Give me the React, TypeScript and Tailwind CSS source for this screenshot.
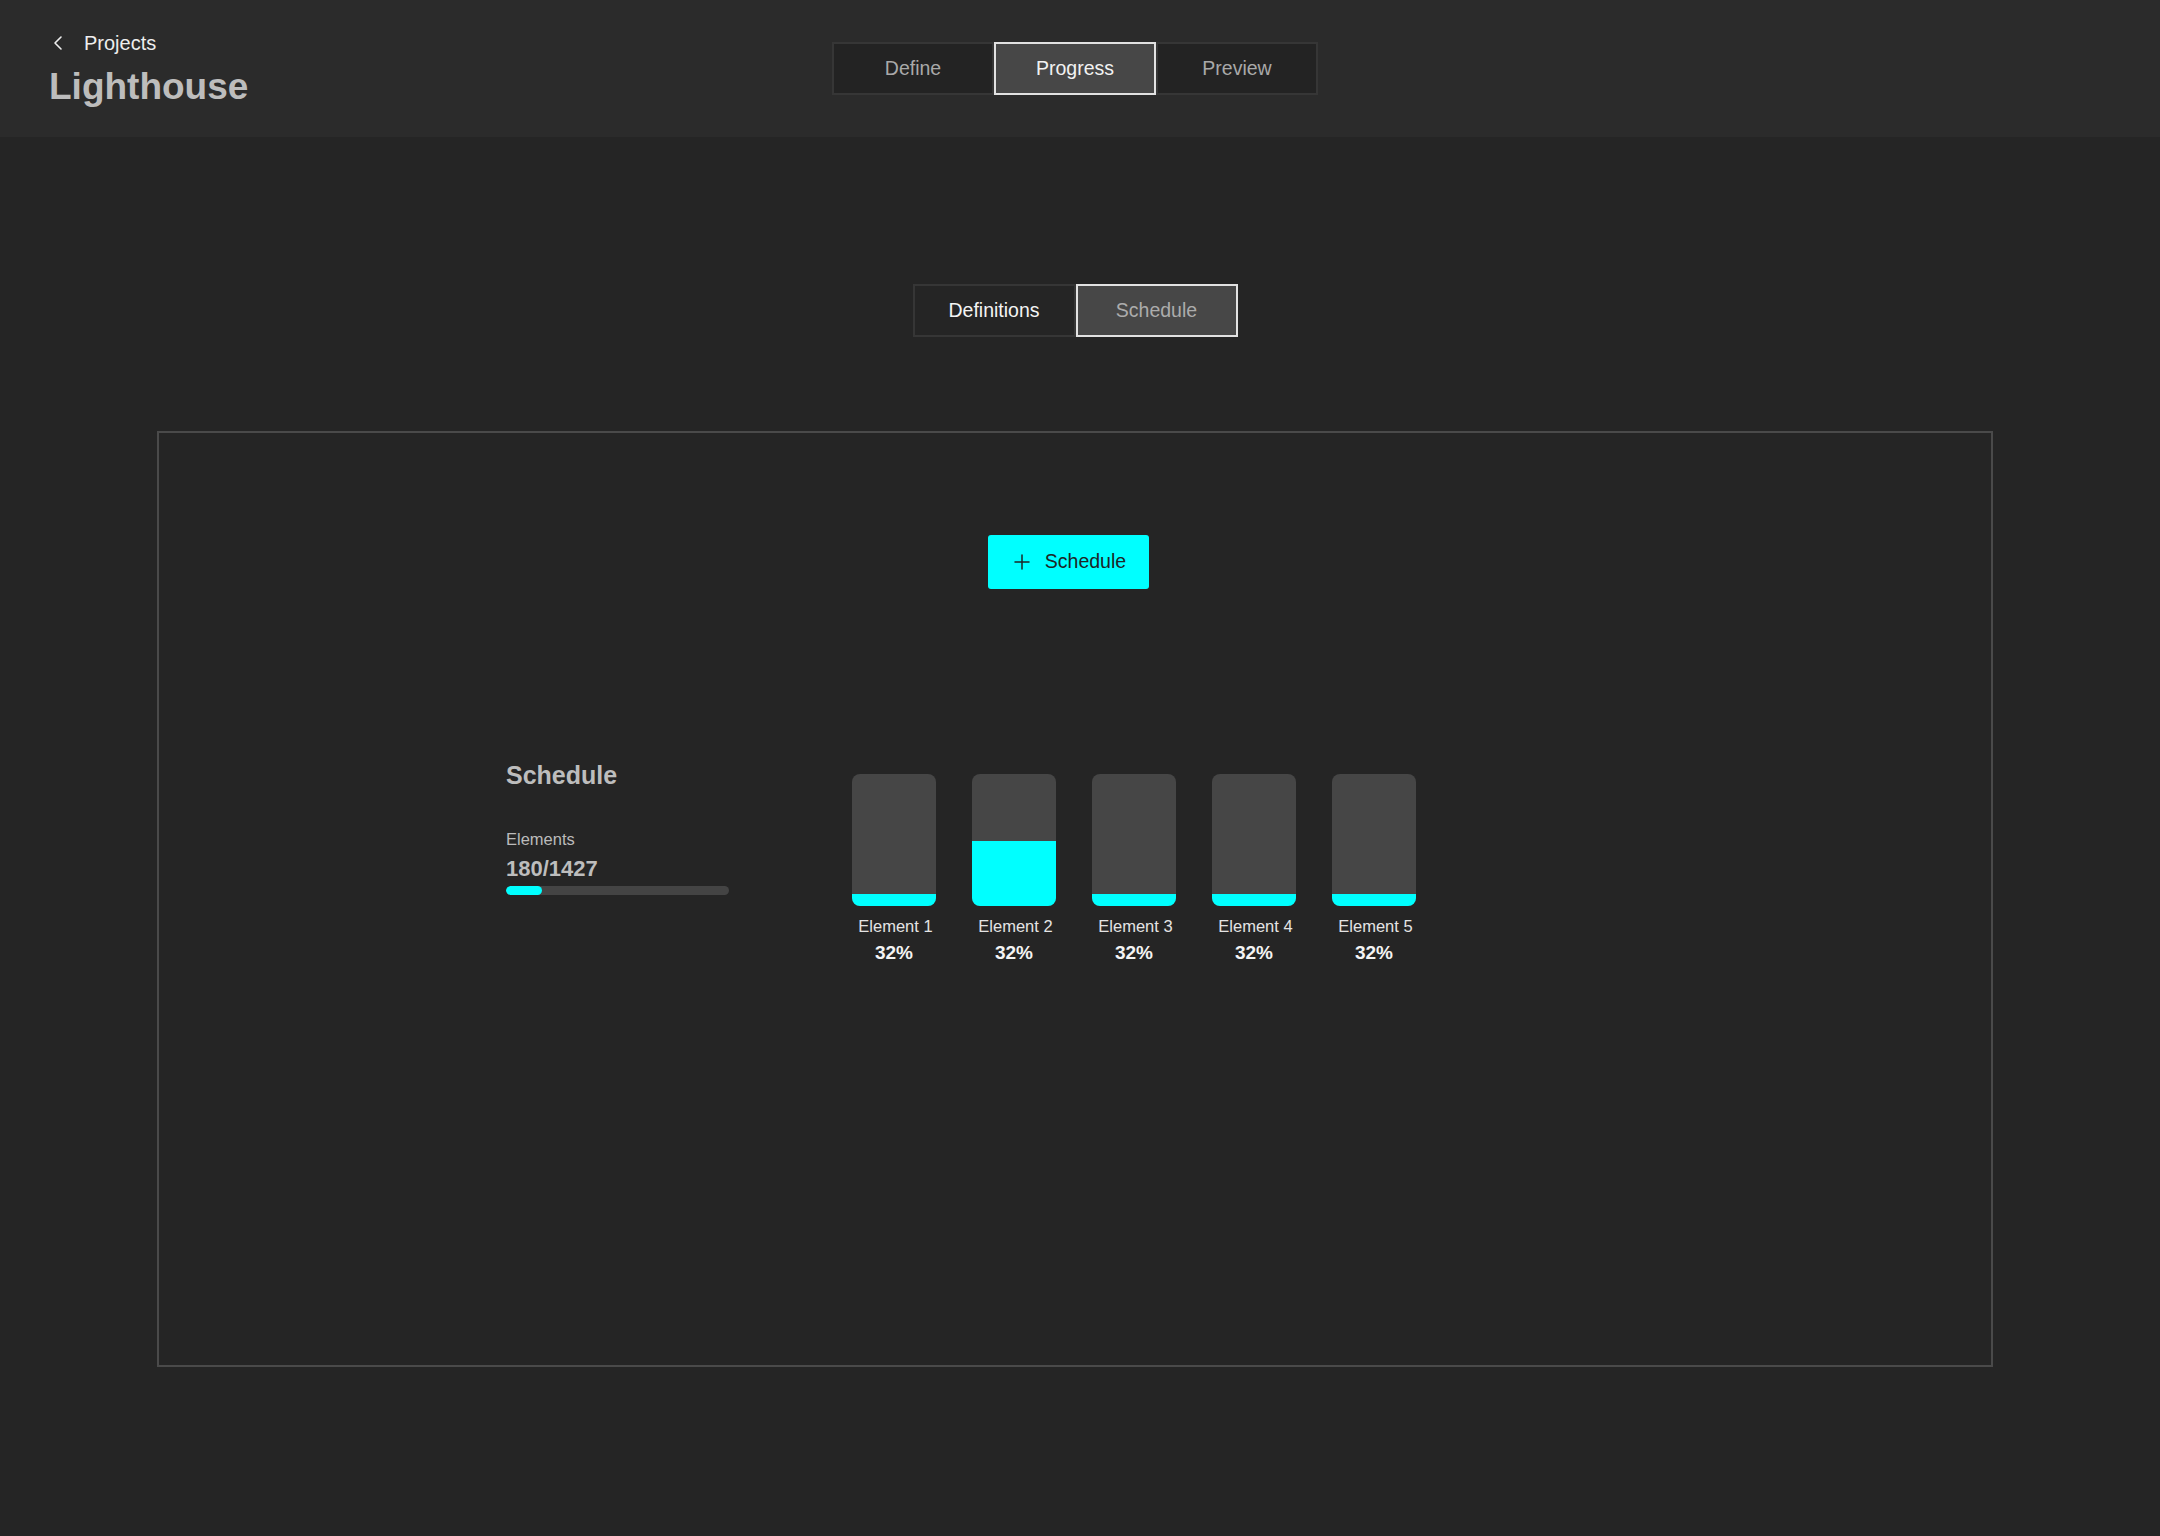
import React from 'react';
import { ChevronLeft, Plus } from 'lucide-react';

const elements = [
  { name: 'Element 1', pct: '32%', fill: 12 },
  { name: 'Element 2', pct: '32%', fill: 65 },
  { name: 'Element 3', pct: '32%', fill: 12 },
  { name: 'Element 4', pct: '32%', fill: 12 },
  { name: 'Element 5', pct: '32%', fill: 12 },
];

const topTabs = ['Define', 'Progress', 'Preview'];

const App: React.FC = () => {
  return (
    <div className="min-h-[1536px] w-[2160px] bg-[#252525] font-['Liberation_Sans',Arial,sans-serif]">
      {/* Header */}
      <header className="h-[137px] bg-[#2b2b2b] pr-[10px] grid grid-cols-[1fr_auto_1fr]">
        <div className="pl-[46px] pt-[31px]">
          <div className="flex items-center h-[24px]">
            <ChevronLeft size={24} strokeWidth={1.6} className="text-[#eeeeee]" />
            <span className="ml-[14px] text-[20px] leading-[24px] text-[#eeeeee]">Projects</span>
          </div>
          <h1 className="ml-[3px] mt-[10px] text-[37px] leading-[44px] font-bold text-[#bdbdbd]">Lighthouse</h1>
        </div>
        <div className="pt-[42px]">
          <div className="flex">
            {topTabs.map((t) =>
              t === 'Progress' ? (
                <div key={t} className="w-[162px] h-[53px] flex items-center justify-center bg-[#474747] border-2 border-[#e2e2e2] text-[19.5px] text-[#f2f2f2]">
                  {t}
                </div>
              ) : (
                <div key={t} className="w-[162px] h-[53px] flex items-center justify-center bg-[#232323] border-2 border-[#363636] text-[19.5px] text-[#a9a9a9]">
                  {t}
                </div>
              )
            )}
          </div>
        </div>
        <div />
      </header>

      <main className="pr-[10px] flex flex-col items-center">
        {/* Sub tabs */}
        <div className="mt-[147px] flex">
          <div className="w-[163px] h-[53px] flex items-center justify-center border-2 border-[#363636] bg-[#252525] text-[19.5px] text-[#f4f4f4]">
            Definitions
          </div>
          <div className="w-[162px] h-[53px] flex items-center justify-center border-2 border-[#e2e2e2] bg-[#474747] text-[19.5px] text-[#acacac]">
            Schedule
          </div>
        </div>

        {/* Content box */}
        <section className="mt-[94px] w-[1836px] h-[936px] border-2 border-[#4a4a4a] flex flex-col">
          <div className="mt-[102px] flex justify-center pr-[14px]">
            <button className="w-[161px] h-[54px] rounded-[3px] bg-[#00ffff] flex items-center justify-center gap-[11px] text-[19.5px] text-[#1d2626]">
              <Plus size={24} strokeWidth={1.5} />
              <span>Schedule</span>
            </button>
          </div>

          <div className="mt-[171px] pl-[347px] flex items-start">
            {/* Summary */}
            <div className="w-[346px]">
              <h2 className="text-[25px] leading-[30px] font-bold text-[#bdbdbd]">Schedule</h2>
              <p className="mt-[39px] text-[16.5px] leading-[20px] text-[#bbbbbb]">Elements</p>
              <p className="mt-[7px] text-[22px] leading-[26px] font-bold text-[#bdbdbd]">180/1427</p>
              <div className="mt-[4px] w-[223px] h-[9px] rounded-full bg-[#444444] overflow-hidden">
                <div className="w-[36px] h-full rounded-full bg-[#00ffff]" />
              </div>
            </div>

            {/* Bars */}
            <div className="pt-[14px] flex gap-[36px]">
              {elements.map((el) => (
                <div key={el.name} className="w-[84px] flex flex-col items-center">
                  <div className="w-[84px] h-[132px] rounded-[8px] bg-[#464646] overflow-hidden flex flex-col justify-end">
                    <div className="w-full bg-[#00ffff]" style={{ height: el.fill }} />
                  </div>
                  <p className="mt-[10px] pl-[3px] text-[16.5px] leading-[20px] text-[#e4e4e4] whitespace-nowrap">{el.name}</p>
                  <p className="mt-[5px] text-[19px] leading-[23px] font-bold text-[#f4f4f4]">{el.pct}</p>
                </div>
              ))}
            </div>
          </div>
        </section>
      </main>
    </div>
  );
};

export default App;
